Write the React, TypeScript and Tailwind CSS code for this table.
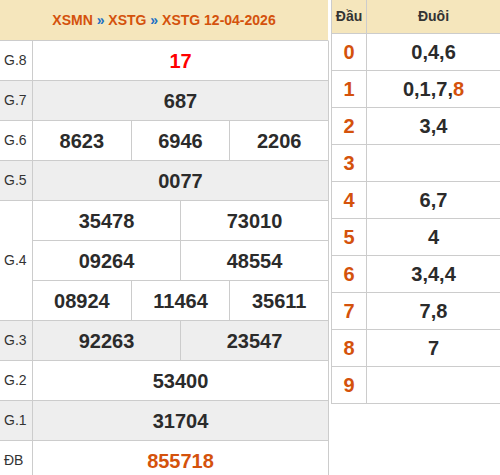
const HEADER_BG = "bg-[#f5e6bc]";

type Prize = {
  label: string;
  lines: string[][];
  shaded?: boolean;
  tone?: "red" | "orange";
};

const prizes: Prize[] = [
  { label: "G.8", lines: [["17"]], tone: "red" },
  { label: "G.7", lines: [["687"]], shaded: true },
  { label: "G.6", lines: [["8623", "6946", "2206"]] },
  { label: "G.5", lines: [["0077"]], shaded: true },
  {
    label: "G.4",
    lines: [
      ["35478", "73010"],
      ["09264", "48554"],
      ["08924", "11464", "35611"],
    ],
  },
  { label: "G.3", lines: [["92263", "23547"]], shaded: true },
  { label: "G.2", lines: [["53400"]] },
  { label: "G.1", lines: [["31704"]], shaded: true },
  { label: "ĐB", lines: [["855718"]], tone: "orange" },
];

const loto: { head: string; tails: string[]; hot?: number }[] = [
  { head: "0", tails: ["0", "4", "6"] },
  { head: "1", tails: ["0", "1", "7", "8"], hot: 3 },
  { head: "2", tails: ["3", "4"] },
  { head: "3", tails: [] },
  { head: "4", tails: ["6", "7"] },
  { head: "5", tails: ["4"] },
  { head: "6", tails: ["3", "4", "4"] },
  { head: "7", tails: ["7", "8"] },
  { head: "8", tails: ["7"] },
  { head: "9", tails: [] },
];

function valueColor(tone?: Prize["tone"]) {
  if (tone === "red") return "text-[#ff0000]";
  if (tone === "orange") return "text-[#d4520c]";
  return "text-[#2b2b2b]";
}

function PrizeRow({ prize }: { prize: Prize }) {
  const bg = prize.shaded ? "bg-[#eeeeee]" : "bg-white";
  return (
    <div className={`flex shrink-0 border-b border-r border-[#cccccc] ${bg}`}>
      <div className="flex w-[33px] shrink-0 items-center border-r border-[#cccccc] pl-[4px] text-[14px] text-[#333]">
        {prize.label}
      </div>
      <div className="flex flex-1 flex-col">
        {prize.lines.map((line, i) => (
          <div
            key={i}
            className={
              i < prize.lines.length - 1
                ? "flex h-[40px] border-b border-[#cccccc]"
                : "flex h-[39px]"
            }
          >
            {line.map((num, j) => (
              <div
                key={j}
                className={`flex flex-1 items-center justify-center text-[20px] font-bold ${valueColor(prize.tone)} ${j > 0 ? "border-l border-[#cccccc]" : ""}`}
              >
                {num}
              </div>
            ))}
          </div>
        ))}
      </div>
    </div>
  );
}

export default function App() {
  return (
    <div className="flex h-[475px] w-[500px] gap-[2px] overflow-hidden bg-white font-['Liberation_Sans',Arial,sans-serif]">
      {/* results */}
      <div className="flex w-[329px] shrink-0 flex-col">
        <div
          className={`flex h-[41px] shrink-0 items-center justify-center whitespace-pre border-b border-r border-[#cccccc] border-r-white text-[14px] font-bold text-[#d4520c] ${HEADER_BG}`}
        >
          XSMN <span className="text-[#1a6fc4]">»</span> XSTG <span className="text-[#1a6fc4]">»</span> XSTG 12-04-2026
        </div>
        {prizes.map((p) => (
          <PrizeRow key={p.label} prize={p} />
        ))}
      </div>

      {/* loto head/tail */}
      <div className="flex flex-1 flex-col self-start border-l border-[#cccccc]">
        <div className={`flex h-[34px] border-b border-[#cccccc] text-[14px] font-bold text-[#333] ${HEADER_BG}`}>
          <div className="flex w-[35px] items-center justify-center border-r border-[#cccccc]">Đầu</div>
          <div className="flex flex-1 items-center justify-center">Đuôi</div>
        </div>
        {loto.map((r) => (
          <div key={r.head} className="flex h-[37px] border-b border-[#cccccc] text-[20px] font-bold">
            <div className="flex w-[35px] items-center justify-center border-r border-[#cccccc] text-[#d4520c]">
              {r.head}
            </div>
            <div className="flex flex-1 items-center justify-center text-[#2b2b2b]">
              {r.tails.map((t, i) => (
                <span key={i}>
                  {i > 0 && ","}
                  <span className={r.hot === i ? "text-[#d4520c]" : ""}>{t}</span>
                </span>
              ))}
            </div>
          </div>
        ))}
      </div>
    </div>
  );
}
